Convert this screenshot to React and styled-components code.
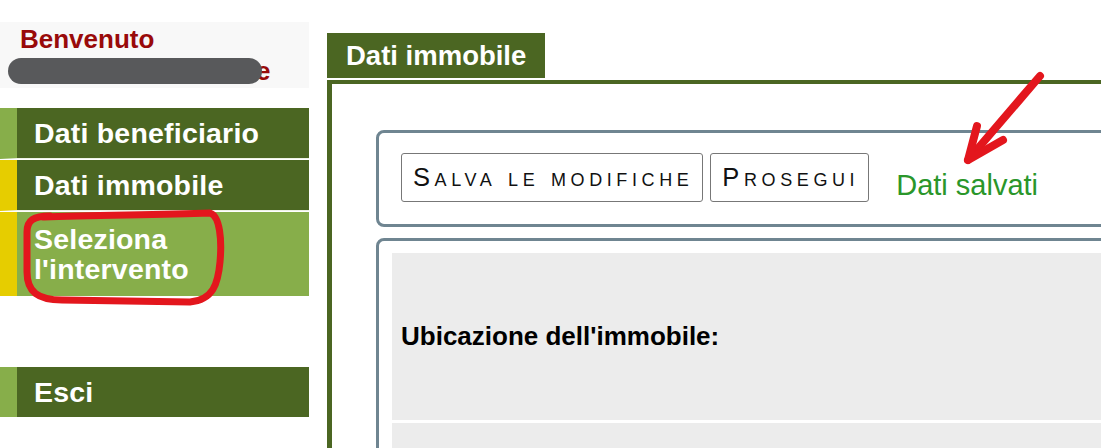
import React from 'react';
import styled, { createGlobalStyle } from 'styled-components';

const DARK_GREEN = '#4b6622';
const LIGHT_GREEN = '#87ae4a';
const YELLOW = '#e6cd00';
const SLATE = '#6f8591';

const GlobalStyle = createGlobalStyle`
  html, body {
    margin: 0;
    padding: 0;
    background: #fff;
    overflow: hidden;
  }
  body {
    font-family: "Liberation Sans", Arial, sans-serif;
  }
`;

const Page = styled.div`
  position: relative;
  display: flex;
  align-items: flex-start;
  gap: 18px;
  width: 1300px;
  height: 448px;
  overflow: hidden;
`;

const Sidebar = styled.aside`
  flex: 0 0 309px;
  margin-top: 22px;
`;

const Welcome = styled.div`
  background: #f8f8f8;
  height: 66px;
  box-sizing: border-box;
  padding: 3px 0 0 20px;
`;

const WelcomeTitle = styled.div`
  color: #990a0a;
  font-size: 26px;
  font-weight: bold;
  line-height: 29px;
`;

const NameRow = styled.div`
  display: flex;
  align-items: center;
  margin: 4px 0 0 -12px;
  height: 26px;
`;

const Redaction = styled.span`
  display: inline-block;
  position: relative;
  z-index: 1;
  width: 254px;
  height: 26px;
  border-radius: 13px;
  background: #58595b;
`;

const NameTail = styled.span`
  color: #990a0a;
  font-size: 26px;
  font-weight: bold;
  margin-left: -6px;
  line-height: 26px;
`;

const Menu = styled.nav`
  margin-top: 20px;
`;

const MenuItem = styled.div`
  display: flex;
  border-left: 17px solid ${(p) => p.$strip};
  background: ${(p) => (p.$active ? LIGHT_GREEN : DARK_GREEN)};
  border-bottom: ${(p) => (p.$divider ? '1px solid #eef2e6' : 'none')};
  margin-bottom: ${(p) => (p.$divider ? '1px' : '0')};
  margin-top: ${(p) => p.$offset || 0}px;
  padding: 10px 0 10px 17px;
  min-height: 30px;
  color: #fff;
  font-size: 28.5px;
  font-weight: bold;
  letter-spacing: 0.2px;
  line-height: 30px;
  ${(p) => p.$active && 'padding: 12px 60px 12px 17px;'}
`;

const Main = styled.main`
  flex: 1;
  margin-top: 33px;
`;

const Tab = styled.div`
  display: inline-block;
  width: 218px;
  height: 45px;
  box-sizing: border-box;
  padding-left: 19px;
  background: ${DARK_GREEN};
  color: #fff;
  font-size: 27.5px;
  font-weight: bold;
  line-height: 46px;
`;

const Panel = styled.section`
  margin-top: 2px;
  border-top: 4px solid ${DARK_GREEN};
  border-left: 5px solid ${DARK_GREEN};
  padding: 46px 0 0 44px;
  height: 400px;
`;

const Fieldset = styled.div`
  border: 3px solid ${SLATE};
  border-radius: 8px;
  padding: ${(p) => p.$pad};
  margin-bottom: 11px;
`;

const Toolbar = styled.div`
  display: flex;
  align-items: flex-end;
  gap: 7px;
`;

const Button = styled.button`
  height: 49px;
  padding: 0 9px 0 11px;
  border: 1px solid #777;
  border-radius: 3px;
  background: #fff;
  color: #111;
  font-family: "Liberation Sans", Arial, sans-serif;
  font-size: 25.5px;
  font-variant: small-caps;
  letter-spacing: 4.6px;
`;

const SavedNote = styled.span`
  margin-left: 20px;
  color: #2a962a;
  font-size: 29px;
  line-height: 33px;
`;

const FieldRow = styled.div`
  display: flex;
  align-items: center;
  height: ${(p) => p.$height}px;
  margin-bottom: 3px;
  padding-left: 9px;
  background: #ececec;
  color: #000;
  font-size: 26px;
  font-weight: bold;
`;

const Annotations = styled.svg`
  position: absolute;
  left: 0;
  top: 0;
  pointer-events: none;
`;

export default function App() {
  return (
    <>
      <GlobalStyle />
      <Page>
        <Sidebar>
          <Welcome>
            <WelcomeTitle>Benvenuto</WelcomeTitle>
            <NameRow>
              <Redaction />
              <NameTail>e</NameTail>
            </NameRow>
          </Welcome>
          <Menu>
            <MenuItem $strip={LIGHT_GREEN} $divider>Dati beneficiario</MenuItem>
            <MenuItem $strip={YELLOW} $divider>Dati immobile</MenuItem>
            <MenuItem $strip={YELLOW} $active>Seleziona l'intervento</MenuItem>
            <MenuItem $strip={LIGHT_GREEN} $offset={71}>Esci</MenuItem>
          </Menu>
        </Sidebar>

        <Main>
          <Tab>Dati immobile</Tab>
          <Panel>
            <Fieldset $pad="20px 22px 22px">
              <Toolbar>
                <Button>Salva le modifiche</Button>
                <Button>Prosegui</Button>
                <SavedNote>Dati salvati</SavedNote>
              </Toolbar>
            </Fieldset>
            <Fieldset $pad="12px 13px">
              <FieldRow $height={167}>Ubicazione dell'immobile:</FieldRow>
              <FieldRow $height={60} />
            </Fieldset>
          </Panel>
        </Main>

        <Annotations width="1101" height="448" viewBox="0 0 1101 448">
          <g fill="none" stroke="#e3161d" strokeLinecap="round" strokeLinejoin="round">
            <path
              strokeWidth="7"
              d="M44 217 C 90 215, 150 215, 210 213 C 220 216, 222 240, 220 262 C 218 284, 213 300, 190 302 L 62 300 C 38 300, 27 292, 27 272 L 27 232 C 27 220, 34 216, 50 216"
            />
            <path strokeWidth="8" d="M1040 76 L 968 160" />
            <path strokeWidth="8" d="M977 126 L 968 160 L 1003 140" />
          </g>
        </Annotations>
      </Page>
    </>
  );
}
